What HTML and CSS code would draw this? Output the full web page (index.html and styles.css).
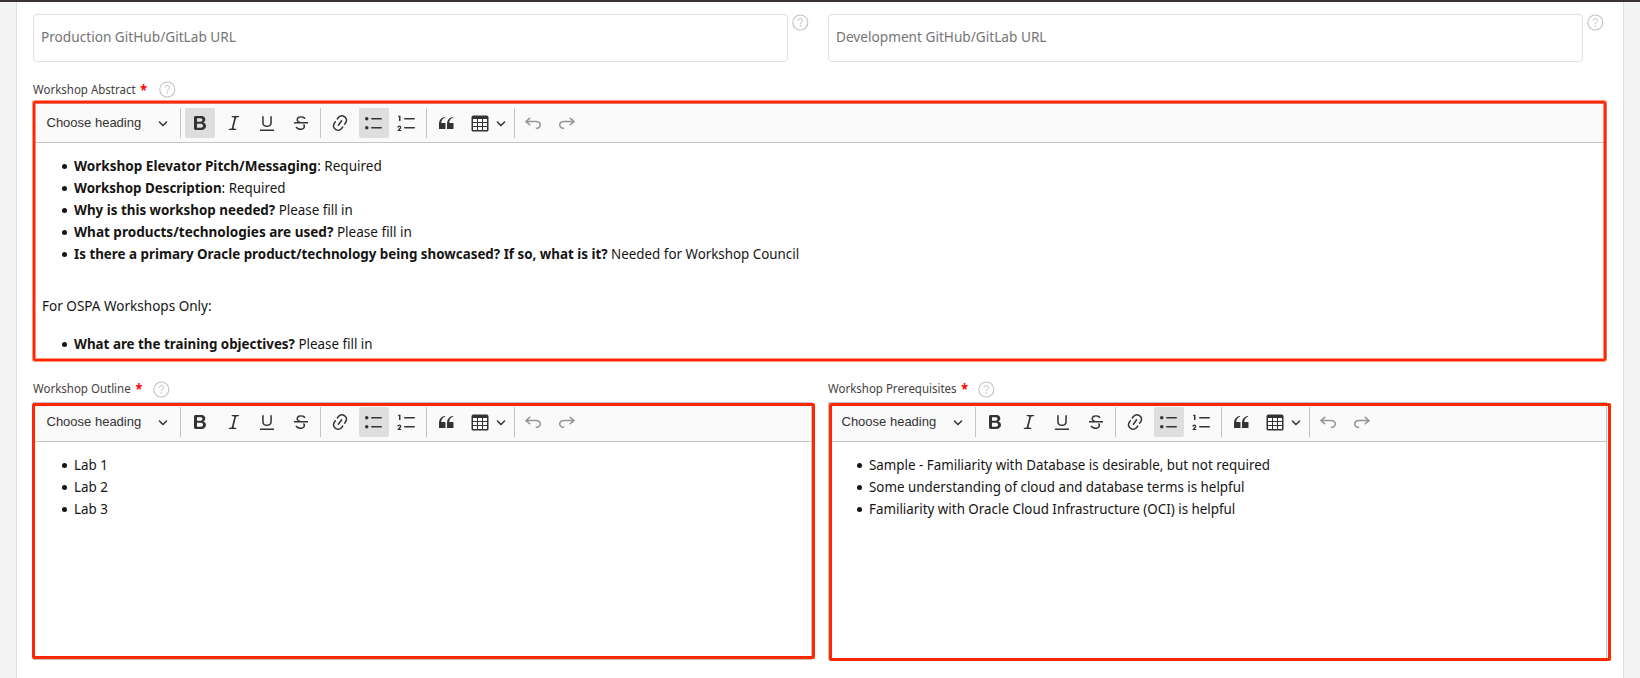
FILE: index.html
```html
<!DOCTYPE html>
<html lang="en">
<head>
<meta charset="utf-8">
<title>Workshop form</title>
<link rel="stylesheet" href="styles.css">
</head>
<body>
<svg class="sprite" aria-hidden="true">
  <symbol id="bold" viewBox="0 0 20 20"><path d="M10.187 17H5.773c-.637 0-1.092-.138-1.364-.415-.273-.277-.409-.718-.409-1.323V4.738c0-.617.14-1.062.419-1.332.279-.27.73-.406 1.354-.406h4.68c.69 0 1.288.041 1.793.124.506.083.96.242 1.36.478.341.197.644.447.906.75a3.262 3.262 0 0 1 .808 2.162c0 1.401-.722 2.426-2.167 3.075C15.05 10.175 16 11.315 16 13.01a3.756 3.756 0 0 1-2.296 3.504 6.1 6.1 0 0 1-1.517.377c-.571.073-1.238.11-2 .11zm-.217-6.217H7v4.087h3.069c1.977 0 2.965-.69 2.965-2.072 0-.707-.256-1.22-.768-1.537-.512-.319-1.277-.478-2.296-.478zM7 5.13v3.619h2.606c.729 0 1.292-.067 1.69-.2a1.6 1.6 0 0 0 .91-.765c.165-.267.247-.566.247-.897 0-.707-.26-1.176-.778-1.409-.519-.232-1.31-.348-2.375-.348H7z"/></symbol>
  <symbol id="italic" viewBox="0 0 20 20"><path d="m9.586 14.633.021.004c-.036.335.095.655.393.962.082.083.173.15.274.201h1.474a.6.6 0 1 1 0 1.2H5.304a.6.6 0 0 1 0-1.2h1.15c.474-.07.809-.182 1.005-.334.157-.122.291-.32.404-.597l2.416-9.55a1.053 1.053 0 0 0-.281-.823 1.12 1.12 0 0 0-.442-.296H8.15a.6.6 0 0 1 0-1.2h6.443a.6.6 0 1 1 0 1.2h-1.195c-.376.056-.65.155-.823.296-.215.175-.423.439-.623.79l-2.366 9.347z"/></symbol>
  <symbol id="underline" viewBox="0 0 20 20"><path d="M3 18v-1.5h14V18zM5.2 10V3.6c0-.4.4-.6.8-.6.3 0 .7.2.7.6v6.2c0 2 1.3 2.8 3.2 2.8 1.9 0 3.4-.9 3.4-2.9V3.6c0-.3.4-.5.8-.5.3 0 .7.2.7.5V10c0 2.7-2.2 4-4.9 4-2.6 0-4.7-1.2-4.7-4z"/></symbol>
  <symbol id="strike" viewBox="0 0 20 20"><path d="M7 16.4c-.8-.4-1.5-.9-2.2-1.5a.6.6 0 0 1-.2-.5l.3-.6h1c1 1.2 2.1 1.7 3.7 1.7 1 0 1.8-.3 2.3-.6.6-.4.6-1.2.6-1.3.2-1.2-.9-2.1-.9-2.1h2.1c.3.7.4 1.2.4 1.7v.8l-.6 1.2c-.6.8-1.1 1-1.6 1.2a6 6 0 0 1-2.4.6c-1 0-1.8-.3-2.5-.6zM6.8 9 6 8.3c-.4-.5-.5-.8-.5-1.6 0-.7.1-1.3.5-1.8.4-.6 1-1 1.6-1.3a6.3 6.3 0 0 1 4.7 0 4 4 0 0 1 1.7 1l.3.7c0 .1.2.4-.2.7-.4.2-.9.1-1 0a3 3 0 0 0-1.2-1c-.4-.2-1-.3-2-.4-.7 0-1.4.2-2 .6-.8.6-1 .8-1 1.5 0 .8.5 1 1.2 1.5.6.4 1.1.7 1.9 1H6.8zM3 10.5V9h14v1.5z"/></symbol>
  <symbol id="link" viewBox="0 0 20 20"><path d="m11.077 15 .991-1.416a.75.75 0 1 1 1.229.86l-1.148 1.64a.748.748 0 0 1-.217.206 5.251 5.251 0 0 1-8.503-5.955.741.741 0 0 1 .12-.274l1.147-1.639a.75.75 0 1 1 1.228.86L4.933 10.7l.006.003a3.75 3.75 0 0 0 6.132 4.294l.006.004zm5.494-5.335a.748.748 0 0 1-.12.274l-1.147 1.639a.75.75 0 1 1-1.228-.86l.86-1.23a3.75 3.75 0 0 0-6.144-4.301l-.86 1.229a.75.75 0 0 1-1.229-.86l1.148-1.64a.748.748 0 0 1 .217-.206 5.251 5.251 0 0 1 8.503 5.955zm-4.563-2.532a.75.75 0 0 1 .184 1.045l-3.155 4.505a.75.75 0 1 1-1.229-.86l3.155-4.506a.75.75 0 0 1 1.045-.184z"/></symbol>
  <symbol id="bullets" viewBox="0 0 20 20"><path d="M7.75 5h9.5a.75.75 0 0 1 0 1.500h-9.500a.75.75 0 0 1 0-1.500zM7.750 14h9.500a.75.75 0 0 1 0 1.500h-9.500a.75.75 0 0 1 0-1.500z"/><circle cx="2.75" cy="5.75" r="1.75"/><circle cx="2.75" cy="14.75" r="1.75"/></symbol>
  <symbol id="numbers" viewBox="0 0 20 20"><path d="M7.75 5h9.5a.75.75 0 0 1 0 1.500h-9.500a.75.75 0 0 1 0-1.500zM7.750 14h9.500a.75.75 0 0 1 0 1.500h-9.500a.75.75 0 0 1 0-1.500zM3.500 3v5H2V3.700H1v-1h2.500V3zM.343 17.857l2.590-3.257H2.920a.6.6 0 1 0-1.040 0H.302a2 2 0 1 1 3.995 0h-.001c-.048.405-.16.734-.333.988-.175.254-.59.692-1.244 1.312H4.300v1h-4l.043-.043z"/></symbol>
  <symbol id="quote" viewBox="0 0 20 20"><path d="M3 10.423a6.500 6.500 0 0 1 6.056-6.408l.038.67C6.448 5.423 5.354 7.663 5.220 10H9c.552 0 .5.432.5.986v4.511c0 .554-.448.503-1 .503h-5c-.552 0-.5-.449-.5-1.003v-4.574zm8 0a6.500 6.500 0 0 1 6.056-6.408l.038.67c-2.646.739-3.740 2.979-3.873 5.315H17c.552 0 .5.432.5.986v4.511c0 .554-.448.503-1 .503h-5c-.552 0-.5-.449-.5-1.003v-4.574z"/></symbol>
  <symbol id="table" viewBox="0 0 20 20"><path d="M3 6v3h4V6H3zm0 4v3h4v-3H3zm0 4v3h4v-3H3zm5 3h4v-3H8v3zm5 0h4v-3h-4v3zm4-4v-3h-4v3h4zm0-4V6h-4v3h4zm1.500 8a1.500 1.500 0 0 1-1.500 1.500H3A1.500 1.500 0 0 1 1.500 17V4c.222-.863 1.068-1.500 2-1.500h13c.932 0 1.778.637 2 1.500v13zM12 13v-3H8v3h4zm0-4V6H8v3h4z"/></symbol>
  <symbol id="undo" viewBox="0 0 20 20"><path d="m5.042 9.367 2.189 1.837a.75.75 0 0 1-.965 1.149l-3.788-3.180a.747.747 0 0 1-.21-.284.75.75 0 0 1 .17-.945L6.230 4.762a.75.75 0 1 1 .964 1.150L4.863 7.866h8.917A.75.75 0 0 1 14 7.900a4 4 0 1 1-1.477 7.718l.344-1.489a2.500 2.500 0 1 0 1.094-4.730l.008-.032H5.042z"/></symbol>
  <symbol id="caret" viewBox="0 0 10 10"><path d="M.941 4.523a.75.75 0 1 1 1.060-1.060l3.006 3.005 3.005-3.005a.75.75 0 1 1 1.060 1.060l-3.549 3.550a.75.75 0 0 1-1.168-.136L.941 4.523z"/></symbol>
  <symbol id="help" viewBox="0 0 17 17"><circle cx="8.300" cy="8.500" r="7.500" fill="none" stroke="#c2c2c2" stroke-width="1.100"/><path d="M6.100 6.700a2.200 2.100 0 1 1 3.500 1.600c-.8.6-1.300.9-1.300 1.900" fill="none" stroke="#bcbcbc"/><circle cx="8.300" cy="12" r=".7" fill="#b4b4b4"/></symbol>
</svg>

<template id="toolbar">
  <div class="heading">Choose heading<svg class="caret"><use href="#caret"/></svg></div>
  <i class="sep"></i>
  <div class="group"><span class="btn bold"><svg><use href="#bold"/></svg></span><span class="btn"><svg><use href="#italic"/></svg></span><span class="btn"><svg><use href="#underline"/></svg></span><span class="btn"><svg><use href="#strike"/></svg></span></div>
  <i class="sep"></i>
  <div class="group"><span class="btn"><svg><use href="#link"/></svg></span><span class="btn on"><svg><use href="#bullets"/></svg></span><span class="btn"><svg><use href="#numbers"/></svg></span></div>
  <i class="sep"></i>
  <div class="group"><span class="btn"><svg><use href="#quote"/></svg></span><span class="btn split"><svg><use href="#table"/></svg><svg class="caret"><use href="#caret"/></svg></span></div>
  <i class="sep"></i>
  <div class="group off"><span class="btn"><svg><use href="#undo"/></svg></span><span class="btn flip"><svg><use href="#undo"/></svg></span></div>
</template>

<main class="page">
  <div class="columns">
    <div class="field">
      <div class="input"><span class="text">Production GitHub/GitLab URL</span></div>
      <svg class="help"><use href="#help"/></svg>
    </div>
    <div class="field">
      <div class="input"><span class="text">Development GitHub/GitLab URL</span></div>
      <svg class="help"><use href="#help"/></svg>
    </div>
  </div>

  <section class="block abstract">
    <div class="label"><span class="text">Workshop Abstract <b>*</b></span><svg class="help"><use href="#help"/></svg></div>
    <div class="editor">
      <div class="toolbar"></div>
      <div class="content">
        <ul>
          <li><span class="text wide"><b>Workshop Elevator Pitch/Messaging</b>: Required</span></li>
          <li><span class="text"><b>Workshop Description</b>: Required</span></li>
          <li><span class="text"><b>Why is this workshop needed?</b> Please fill in</span></li>
          <li><span class="text wide"><b>What products/technologies are used?</b> Please fill in</span></li>
          <li><span class="text"><b>Is there a primary Oracle product/technology being showcased? If so, what is it?</b> Needed for Workshop Council</span></li>
        </ul>
        <p><span class="text wide">For OSPA Workshops Only:</span></p>
        <ul>
          <li><span class="text"><b>What are the training objectives?</b> Please fill in</span></li>
        </ul>
      </div>
      <div class="mark"></div>
    </div>
  </section>

  <div class="columns lower">
    <section class="block outline">
      <div class="label"><span class="text">Workshop Outline <b>*</b></span><svg class="help"><use href="#help"/></svg></div>
      <div class="editor">
        <div class="toolbar"></div>
        <div class="content">
          <ul>
            <li><span class="text">Lab 1</span></li>
            <li><span class="text">Lab 2</span></li>
            <li><span class="text">Lab 3</span></li>
          </ul>
        </div>
        <div class="mark"></div>
      </div>
    </section>
    <section class="block prereq">
      <div class="label"><span class="text">Workshop Prerequisites <b>*</b></span><svg class="help"><use href="#help"/></svg></div>
      <div class="editor">
        <div class="toolbar"></div>
        <div class="content">
          <ul>
            <li><span class="text">Sample - Familiarity with Database is desirable, but not required</span></li>
            <li><span class="text">Some understanding of cloud and database terms is helpful</span></li>
            <li><span class="text">Familiarity with Oracle Cloud Infrastructure (OCI) is helpful</span></li>
          </ul>
        </div>
        <div class="mark"></div>
      </div>
    </section>
  </div>
</main>
<script src="toolbar.js"></script>
</body>
</html>
```

FILE: toolbar.js
```js
// Every editor shares the same toolbar markup.
const toolbar = document.getElementById("toolbar");
document.querySelectorAll(".toolbar").forEach((el) => {
  el.append(toolbar.content.cloneNode(true));
});
```

FILE: styles.css
```css
* { box-sizing: border-box; }

body {
  margin: 0;
  height: 678px;
  overflow: hidden;
  padding: 0 16px;
  border-top: 2px solid #3a3432;
  background: #f4f4f4;
  color: #161513;
  font: 15px/22px "Noto Sans", sans-serif;
}

.sprite { position: absolute; width: 0; height: 0; }

.page {
  height: 676px;
  padding: 12px 16px 0;
  background: #fff;
  border: solid #dfdfdf;
  border-width: 0 1px;
}

.text {
  display: inline-block;
  white-space: nowrap;
  transform: scaleX(.891);
  transform-origin: 0 50%;
}
.text.wide { transform: scaleX(.902); }

.columns {
  display: grid;
  grid-template-columns: 779px 779px;
  gap: 16px;
}

.field { display: flex; gap: 4px; }

.input {
  width: 755px;
  height: 48px;
  padding: 10px 7px;
  border: 1px solid #e0e0e0;
  border-radius: 4px;
  color: #757575;
}
.input .text { transform: scaleX(.909); }

.help { width: 17px; height: 17px; flex: none; display: block; }

.label {
  display: flex;
  align-items: center;
  height: 17px;
  color: #45413e;
  font-size: 13px;
  line-height: 17px;
}
.label .text { transform: scaleX(.884); }
.label b { margin-left: 2px; color: #f00; font-size: 14px; line-height: 1; vertical-align: -1px; }
.abstract .label { margin-top: 19px; }
.abstract .label .text { width: 126px; }
.outline .label .text { width: 120px; }
.prereq .label .text { width: 150px; }
.lower { margin-top: 21px; }
.lower .label .text { padding-bottom: 2px; }

.editor {
  position: relative;
  border: 1px solid #c4c4c4;
}
.abstract .editor { width: 1574px; height: 257px; margin-top: 5px; }
.lower .editor { height: 258px; margin-top: 4px; }

.toolbar {
  display: flex;
  align-items: center;
  height: 39px;
  padding-left: 12.500px;
  background: #fafafa;
  border-bottom: 1px solid #c4c4c4;
  color: #333;
}

.heading {
  display: flex;
  align-items: center;
  justify-content: space-between;
  width: 121px;
  margin-right: 12.500px;
  font: 13px/20px "Liberation Sans", sans-serif;
}

.sep { width: 1px; height: 30px; background: #c4c4c4; }
.group { display: flex; gap: 3.670px; margin: 0 4px; }

.btn {
  display: flex;
  align-items: center;
  justify-content: center;
  width: 30px;
  height: 30px;
  border-radius: 2px;
}
.btn.on, .abstract .btn.bold { background: #dedede; }
.btn.split { width: 45.500px; }
.btn svg, .caret { width: 20px; height: 20px; display: block; fill: #333; }
.heading .caret, .btn .caret { width: 10px; height: 10px; }
.btn .caret { margin-left: 6px; }
.off { margin-left: 3px; opacity: .5; }
.flip { transform: scaleX(-1); }

.content { padding: 11px 8px; }
.content ul { margin: 0; padding: 0 0 0 32px; list-style: none; }
.content li { position: relative; height: 22px; }
.content li::before {
  content: "";
  position: absolute;
  left: -12px;
  top: 10px;
  width: 5px;
  height: 5px;
  border-radius: 50%;
  background: #161513;
}
.content p { margin: 30px 0 16px; }

/* Highlight frames drawn over the editors */
.mark {
  position: absolute;
  border: 3px solid #ff2600;
  border-radius: 2px;
}
.abstract .mark {
  inset: -3px 0 -2px -1px;
  border-width: 2px;
  box-shadow: 0 0 0 1px rgba(255, 38, 0, .5), inset 0 0 0 1px rgba(255, 38, 0, .5);
}
.outline .mark { inset: 0 -4px 0 -2px; }
.prereq .mark { inset: 0 -5px -2px 0; }
```
